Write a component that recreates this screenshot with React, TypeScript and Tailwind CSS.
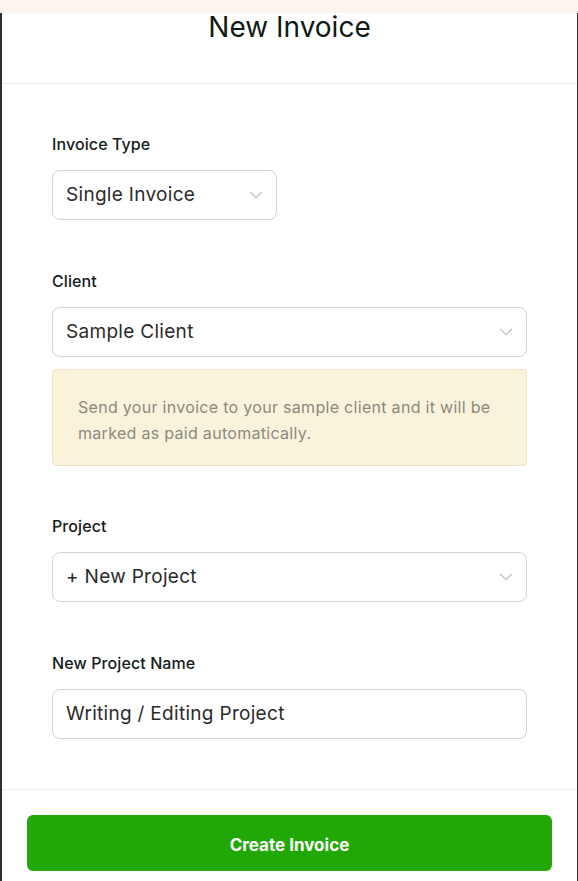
import { ChevronDown } from 'lucide-react';

const font = { fontFamily: 'Inter, "Noto Sans", sans-serif' };

function Label({ children }: { children: React.ReactNode }) {
  return (
    <div className="mb-[14px] text-[16px] leading-[24px] font-medium tracking-[0.1px] text-[#15201a]">
      {children}
    </div>
  );
}

function Select({ value, wide = true }: { value: string; wide?: boolean }) {
  return (
    <div
      className={`flex h-[50px] items-center justify-between rounded-[8px] border border-[#d4d4d4] bg-white pl-[13px] pr-[9px] ${
        wide ? 'w-full' : 'w-[225px]'
      }`}
    >
      <span className="text-[19px] tracking-[0.3px] text-[#2b2b2b]">{value}</span>
      <ChevronDown className="h-[22px] w-[22px] text-[#c8c8c8]" strokeWidth={1.6} />
    </div>
  );
}

export default function App() {
  return (
    <div className="flex h-[881px] w-full flex-col overflow-hidden bg-white" style={font}>
      <div className="h-[13px] shrink-0 bg-[#fdf5ee]" />
      <div className="flex flex-1 flex-col border-l-2 border-r border-[#2f2f2f] bg-white">
        <div className="h-[71px] shrink-0 border-b border-[#ebebeb] text-center text-[28px] leading-[28px] text-[#0f1a14]">
          New Invoice
        </div>
        <div className="px-[50px] pt-[48px] pb-[50px] border-b border-[#ebebeb]">
          <Label>Invoice Type</Label>
          <Select value="Single Invoice" wide={false} />

          <div className="mt-[49px]">
            <Label>Client</Label>
            <Select value="Sample Client" />
            <div className="mt-[12px] rounded-[4px] border border-[#efe6c6] bg-[#faf3dc] pl-[25px] pr-[24px] pt-[24px] pb-[19px] text-[16px] leading-[26px] tracking-[0.3px] text-[#8a8a7c]">
              Send your invoice to your sample client and it will be marked as paid automatically.
            </div>
          </div>

          <div className="mt-[48px]">
            <Label>Project</Label>
            <Select value="+ New Project" />
          </div>

          <div className="mt-[49px]">
            <Label>New Project Name</Label>
            <div className="flex h-[50px] w-full items-center rounded-[8px] border border-[#d4d4d4] bg-white pl-[13px] text-[19px] tracking-[0.3px] text-[#2b2b2b]">
              Writing / Editing Project
            </div>
          </div>
        </div>
        <div className="px-[25px] pt-[25px]">
          <button className="flex h-[56px] w-full items-center justify-center rounded-[6px] bg-[#22a806] pt-[5px] text-[17px] font-bold text-white">
            Create Invoice
          </button>
        </div>
      </div>
    </div>
  );
}
